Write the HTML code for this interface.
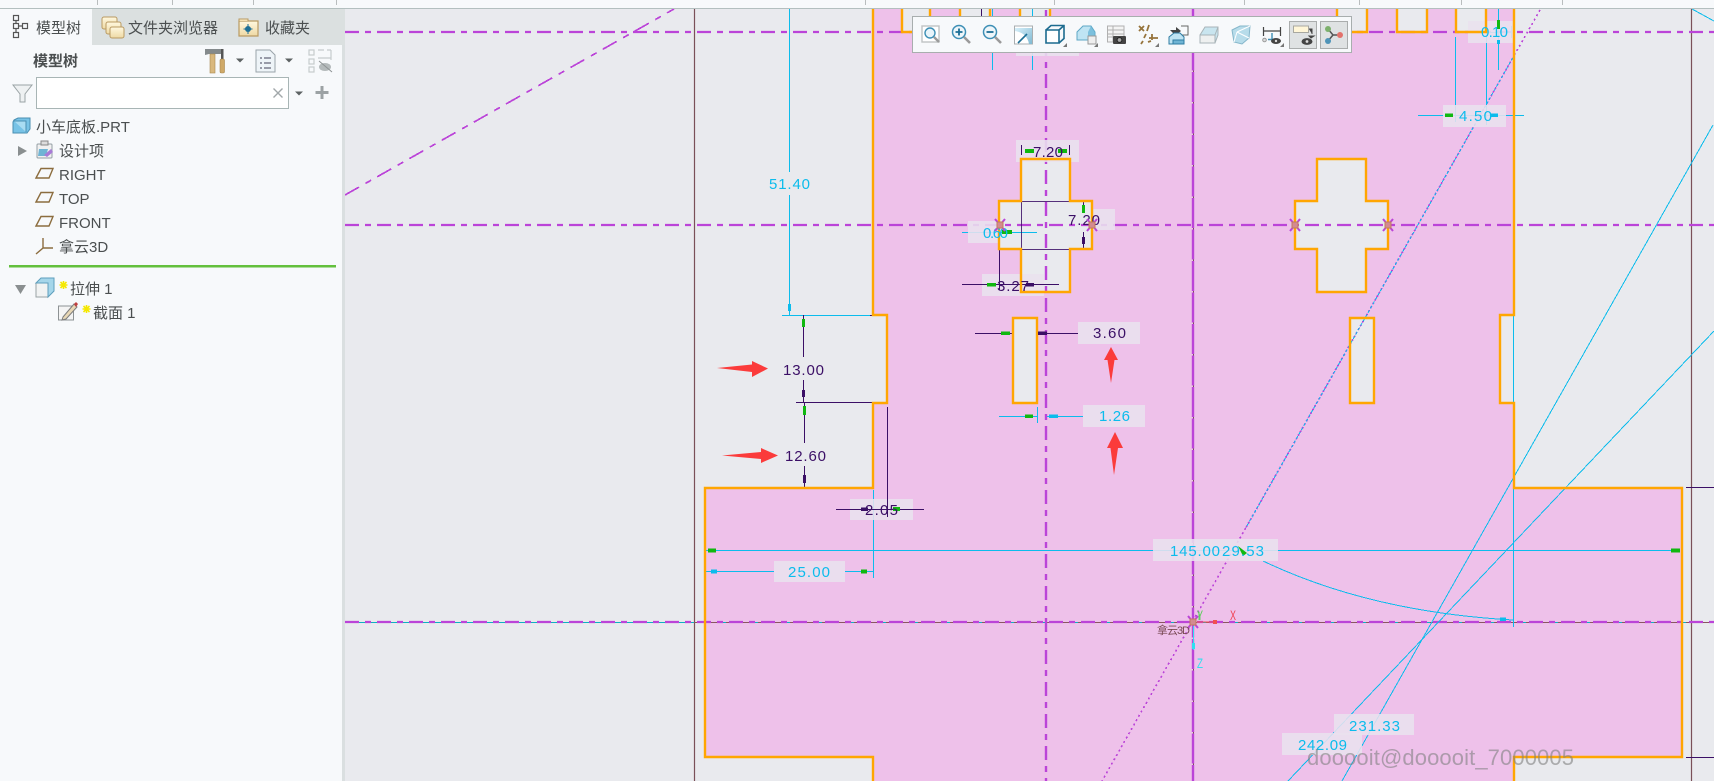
<!DOCTYPE html>
<html lang="zh"><head><meta charset="utf-8"><title>模型树</title>
<style>
html,body{margin:0;padding:0;background:#e9eaee;width:1714px;height:781px;overflow:hidden}
svg{display:block;position:absolute;left:0;top:0}
.d{font-family:"Liberation Sans",sans-serif;font-size:15px}
.c{fill:#0cbcec}.k{fill:#3b0f66}
.s{font-family:"Liberation Sans","Noto Sans CJK SC",sans-serif;font-size:15px;fill:#4b4f50}
.a{shape-rendering:crispEdges}
</style></head><body>
<svg width="1714" height="781" viewBox="0 0 1714 781" xmlns="http://www.w3.org/2000/svg">
<defs>
<g id="m"><path d="M-5-6L5 6M5-6L-5 6" stroke="#bb44d8" stroke-width="2" fill="none"/><rect x="-3" y="-3" width="6" height="6" fill="#d48a90" stroke="#c07a60"/></g>
<linearGradient id="bl" x1="0" y1="0" x2="1" y2="1"><stop offset="0" stop-color="#d8f0fa"/><stop offset="1" stop-color="#7fb9d2"/></linearGradient>
<linearGradient id="fo" x1="0" y1="0" x2="0" y2="1"><stop offset="0" stop-color="#fff8e0"/><stop offset="1" stop-color="#eed9a4"/></linearGradient>
</defs>
<rect width="1714" height="781" fill="#e9eaee"/>

<!-- pink body -->
<path fill="#eec1ea" d="M873 0V315H887V403H873V488H705V757H873V790H1514V757H1682V488H1514V403H1500V315H1514V0H1486V32H1456V0H1427V32H1397V0H1367V32H1337V0H1050V32H1020V0H990V32H960V0H930V32H902V0Z
M1021 159H1070V201H1092V249H1070V292H1021V249H999V201H1021Z M1317 159H1366V201H1388V249H1366V292H1317V249H1295V201H1317Z M1013 318H1037V403H1013Z M1350 318H1374V403H1350Z" fill-rule="evenodd"/>

<!-- reference lines -->
<g fill="none">
<path d="M694.5 9V781M1691.5 9V781" stroke="#7a5058" stroke-width="1.2"/>
<path d="M345 622.5H1714" stroke="#10b0c0"/>
<path d="M694 622.5H1714" stroke="#8a5560" stroke-dasharray="8 8"/>
<path d="M1193.5 9V781" stroke="#7a5058"/>
<g stroke="#bb44d8" stroke-width="2.2">
<path d="M345 32H1714M345 225H1714M345 622H1714" stroke-dasharray="14 6 6 6"/>
<path d="M1046 10V781" stroke-dasharray="14 6 6 6" stroke-width="2.4"/>
<path d="M1193 9V781" stroke-dasharray="30 1.5" stroke-width="2.4"/>
</g>
<path class="a" d="M345 195L674 9" stroke="#bb44d8" stroke-width="1.7" stroke-dasharray="16 7.5 6.5 7"/>
<g class="a" stroke="#bb44d8" stroke-width="1.6">
<path d="M1540 10L1512.7 58" stroke-dasharray="2 3"/>
<path d="M1512.7 58L1245.7 528" stroke-dasharray="2 2.2"/>
<path d="M1245.7 528L1102 781" stroke-dasharray="2 3"/>
</g>
<g class="a" stroke="#0cbcec">
<path d="M1713 125L1342 781"/>
<path d="M1714 331L1288 781"/>
<path d="M1692 9L1714 21"/>
<path d="M1512.7 58L1245.7 528" stroke-width="1" stroke-dasharray="3 2"/>
<path d="M1263 561Q1370 612 1513 620"/>
<path d="M789.5 9V172M789.5 195V315"/>
<path d="M782 315.5H870"/>
<path d="M1513.5 315V403M1513.5 488V627"/>
<path d="M873.5 490V578"/>
<path d="M706 550.5H1680"/>
<path d="M706 571.5H774M845 571.5H873"/>
<path d="M962 232.5H1037"/>
<path d="M999 416.5H1037M1047 416.5H1083M1037.5 407V423"/>
<path d="M992.5 9V16M1032.5 9V16M992.5 52V70M1032.5 52V70"/>
<path d="M1418 115.5H1524M1455.5 37V122M1486.5 32V125M1498.5 9V70M1483 32.5H1511M1511.5 26V38"/>
</g>
</g>

<!-- label boxes -->
<g fill="#e9e1ee" fill-opacity=".88">
<rect x="1016" y="140" width="63" height="22"/>
<rect x="1016" y="52" width="63" height="4"/>
<rect x="1092" y="209" width="23" height="21"/>
<rect x="968" y="221" width="31" height="22"/>
<rect x="982" y="274" width="62" height="22"/>
<rect x="1078" y="322" width="62" height="22"/>
<rect x="1083" y="405" width="62" height="22"/>
<rect x="850" y="499" width="63" height="21"/>
<rect x="774" y="561" width="71" height="21"/>
<rect x="1153" y="539" width="125" height="22"/>
<rect x="1334" y="714" width="80" height="21"/>
<rect x="1282" y="733" width="80" height="22"/>
<rect x="1443" y="105" width="63" height="22"/>
<rect x="1468" y="21" width="45" height="22"/>
</g>

<!-- dark dimension lines -->
<g fill="none" stroke="#3b0f66">
<path d="M981.5 9V16"/>
<path d="M803.5 315V357M803.5 380V402M796 402.5H873M804.5 403V443M804.5 466V487"/>
<path d="M887.5 407V517M836 509.5H924"/>
<path d="M1021.5 145V155M1069.5 145V155"/>
<path d="M1021 201.5H1070M1021 249.5H1070M1021.5 201V249" stroke-opacity=".85"/>
<path d="M1083.5 202V213M1083.5 232V248"/>
<path d="M999.5 249V290M962 284.5H1059"/>
<path d="M975 333.5H1013M1037 333.5H1078"/>
<path d="M1686 487.5H1714M1686 757.5H1714"/>
<path d="M870 315.5H873"/>
</g>

<!-- orange outline -->
<g fill="none" stroke="#ffa602" stroke-width="2.4" stroke-linejoin="miter">
<path d="M873 0V315H887V403H873V488H705V757H873V790M1514 790V757H1682V488H1514V403H1500V315H1514V0M1486 0V32H1456V0M1427 0V32H1397V0M1367 0V32H1337V0M1050 0V32H1020V0M990 0V32H960V0M930 0V32H902V0"/>
<path d="M1021 159H1070V201H1092V249H1070V292H1021V249H999V201H1021Z"/>
<path d="M1317 159H1366V201H1388V249H1366V292H1317V249H1295V201H1317Z"/>
<path d="M1013 318H1037V403H1013Z"/>
<path d="M1350 318H1374V403H1350Z"/>
</g>

<!-- arrow heads -->
<g fill="#10b810">
<rect x="708" y="548.5" width="8" height="4"/><rect x="1671" y="548.5" width="9" height="4"/>
<rect x="861" y="569.5" width="6" height="4"/>
<rect x="893" y="507" width="7" height="4"/>
<rect x="802" y="319" width="3" height="8"/><rect x="803" y="406" width="3" height="9"/>
<rect x="1025" y="149" width="9" height="4"/><rect x="1058" y="149" width="9" height="4"/>
<rect x="1082" y="205" width="3" height="8"/>
<rect x="1002" y="230" width="10" height="4"/>
<rect x="987" y="283" width="9" height="3.5"/>
<rect x="1001" y="331.5" width="9" height="3.5"/>
<rect x="1025" y="414.5" width="8" height="3.5"/>
<rect x="1445" y="113.5" width="8" height="3.5"/>
<rect x="1497" y="20" width="3" height="9"/>
<path d="M1238 546L1247 553L1243 556Z"/>
</g>
<g fill="#3b0f66">
<rect x="861" y="507.5" width="7" height="3.5"/>
<rect x="802" y="390" width="3" height="7"/><rect x="803" y="475" width="3" height="8"/>
<rect x="1082" y="237" width="3" height="7"/>
<rect x="1026" y="283" width="8" height="3.5"/>
<rect x="1038" y="331.5" width="9" height="3.5"/>
</g>
<g fill="#0cbcec">
<rect x="788" y="304" width="3" height="7"/>
<rect x="711" y="569.5" width="6" height="4"/>
<rect x="1049" y="414.5" width="9" height="3.5"/>
<rect x="1490" y="113.5" width="8" height="3.5"/>
<rect x="1497" y="40" width="3" height="4"/>
<rect x="1500" y="617.5" width="6" height="3.5"/>
</g>

<!-- dimension text -->
<text class="d c" x="769" y="189" textLength="41" lengthAdjust="spacing">51.40</text>
<text class="d k" x="783" y="375" textLength="41" lengthAdjust="spacing">13.00</text>
<text class="d k" x="785" y="461" textLength="41" lengthAdjust="spacing">12.60</text>
<text class="d k" x="1033" y="157" textLength="30" lengthAdjust="spacing">7.20</text>
<text class="d k" x="1068" y="225" textLength="32" lengthAdjust="spacing">7.20</text>
<text class="d c" x="983" y="238" textLength="25" lengthAdjust="spacing">0.60</text>
<text class="d k" x="997" y="291" textLength="32" lengthAdjust="spacing">3.27</text>
<text class="d k" x="1093" y="338" textLength="33" lengthAdjust="spacing">3.60</text>
<text class="d c" x="1099" y="421" textLength="31" lengthAdjust="spacing">1.26</text>
<text class="d k" x="865" y="515" textLength="33" lengthAdjust="spacing">2.05</text>
<text class="d c" x="788" y="577" textLength="42" lengthAdjust="spacing">25.00</text>
<text class="d c" x="1170" y="556" textLength="50" lengthAdjust="spacing">145.00</text>
<text class="d c" x="1222" y="556" textLength="42" lengthAdjust="spacing">29.53</text>
<text class="d c" x="1349" y="731" textLength="51" lengthAdjust="spacing">231.33</text>
<text class="d c" x="1298" y="750" textLength="49" lengthAdjust="spacing">242.09</text>
<text class="d c" x="1459" y="121" textLength="33" lengthAdjust="spacing">4.50</text>
<text class="d c" x="1481" y="37" textLength="27" lengthAdjust="spacing">0.10</text>

<!-- datum markers -->
<use href="#m" x="1000" y="225"/><use href="#m" x="1092" y="225"/><use href="#m" x="1295" y="225"/><use href="#m" x="1388" y="225"/>
<use href="#m" x="1193" y="622"/>

<!-- csys -->
<path d="M1197 622H1216" stroke="#f05050" fill="none"/><rect x="1213" y="620" width="4" height="4" fill="#f05050"/>
<path d="M1193.5 626V650" stroke="#30e0f0" fill="none"/><rect x="1192" y="643" width="3" height="6" fill="#30e0f0"/>
<path d="M1199 612V620" stroke="#60d060"/>
<text x="1197" y="620" font-family="Liberation Sans,sans-serif" font-size="14" fill="#50d050" textLength="6" lengthAdjust="spacingAndGlyphs">Y</text>
<text x="1230" y="620" font-family="Liberation Sans,sans-serif" font-size="14" fill="#f04050" textLength="6" lengthAdjust="spacingAndGlyphs">X</text>
<text x="1197" y="668" font-family="Liberation Sans,sans-serif" font-size="14" fill="#30e0f0" textLength="6" lengthAdjust="spacingAndGlyphs">Z</text>
<text x="1157" y="634" font-family="&quot;Liberation Sans&quot;,&quot;Noto Sans CJK SC&quot;,sans-serif" font-size="11" fill="#7a4a55" textLength="33" lengthAdjust="spacing">拿云3D</text>

<!-- red arrows -->
<g fill="#fb3b3b">
<path d="M717 368L752 364.5V361L768 368.5L752 377V372Z"/>
<path d="M722 455.5L761 452V448L778 455.5L761 463V459Z"/>
<path d="M1111 347L1118 360H1114.5L1111 383L1107.5 360H1104Z"/>
<path d="M1115 432L1123 448H1118L1114 475L1110.5 448H1107Z"/>
</g>

<!-- watermark -->
<text x="1307" y="765" font-family="Liberation Sans,sans-serif" font-size="22" fill="#808080" fill-opacity=".6" textLength="267" lengthAdjust="spacing">dooooit@dooooit_7000005</text>

<!-- floating toolbar -->
<rect x="912.5" y="16.5" width="439" height="36" fill="#f7f9fb" stroke="#a8aeae"/>
<rect x="1289.5" y="21.5" width="27" height="27" fill="#dfe2e3" stroke="#aaadad"/>
<rect x="1320.5" y="21.5" width="27" height="27" fill="#dfe2e3" stroke="#aaadad"/>
<!-- 1 zoom fit -->
<rect x="922" y="26" width="17" height="16" fill="#fff" stroke="#bfc3c4" stroke-width="1.4"/>
<circle cx="930" cy="33" r="5" fill="#e8f4fa" stroke="#3d8fb5" stroke-width="1.4"/>
<path d="M934 37L939 42" stroke="#9a9a9a" stroke-width="2.4"/>
<!-- 2 zoom in -->
<circle cx="959" cy="32" r="6.5" fill="#eef6fa" stroke="#3d8fb5" stroke-width="1.5"/>
<path d="M955.5 32H962.5M959 28.5V35.5" stroke="#1c6f96" stroke-width="1.8"/>
<path d="M964 37L970 43" stroke="#9a9a9a" stroke-width="2.6"/>
<!-- 3 zoom out -->
<circle cx="990" cy="32" r="6.5" fill="#eef6fa" stroke="#3d8fb5" stroke-width="1.5"/>
<path d="M986.5 32H993.5" stroke="#1c6f96" stroke-width="1.8"/>
<path d="M995 37L1001 43" stroke="#9a9a9a" stroke-width="2.6"/>
<!-- 4 refit -->
<rect x="1014.5" y="26" width="18" height="18" fill="#fff" stroke="#a9aeb0"/>
<path d="M1015 28H1032V44H1029Q1027 33 1015 31Z" fill="url(#bl)"/>
<path d="M1018 43L1027 34" stroke="#1c6f96" stroke-width="1.6"/>
<!-- 5 cube -->
<path d="M1046 30H1059V43H1046Z" fill="#fff" stroke="#1c6b8f" stroke-width="1.6"/>
<path d="M1046 30L1051 25.5H1064V38.5L1059 43M1059 30L1064 25.5" fill="none" stroke="#1c6b8f" stroke-width="1.6"/>
<path d="M1067 43V47H1063Z" fill="#777"/>
<!-- 6 display style -->
<path d="M1077 32L1083 26H1091L1095 32V40H1077Z" fill="#bfe4f3" stroke="#5fa8c6"/>
<path d="M1077 32H1088L1091 26L1095 32V40H1088V32" fill="#5fb1d3" fill-opacity=".7"/>
<rect x="1088" y="36" width="8" height="8" fill="#eee" stroke="#999"/>
<path d="M1098 43V47H1094Z" fill="#777"/>
<!-- 7 table camera -->
<path d="M1107.5 26H1124V37H1107.5ZM1107.5 30H1124M1107.5 34H1124M1107.5 37V42H1114M1113 26V42" fill="#f4f4f4" stroke="#b0b0b0"/>
<rect x="1113" y="36" width="13" height="8" rx="1" fill="#444"/><circle cx="1119.5" cy="40" r="2.4" fill="#aaa" stroke="#222"/>
<!-- 8 datum -->
<g stroke="#96743c" stroke-width="1.8" fill="none"><path d="M1139 26L1144 31M1144 26L1139 31M1149 25L1147 31M1146 34L1144 38M1143 41L1141 44M1148 42L1151 41M1152 34V40M1149 38H1158"/></g>
<path d="M1159 43V47H1155Z" fill="#777"/>
<!-- 9 boxes -->
<path d="M1181 26H1188V35H1181" fill="none" stroke="#666"/>
<path d="M1170 30H1176V27L1181 31L1176 35V33H1173" fill="#444"/>
<path d="M1169 37L1174 33H1180L1184 37V44H1169Z" fill="#bfe4f3" stroke="#2f7da3"/>
<path d="M1173 40H1184V44H1173Z" fill="#6fb4d4" stroke="#2f7da3"/>
<!-- 10 light cube -->
<path d="M1200 35L1205 27H1218L1218 35L1215 43H1200Z" fill="#c9e5ef" stroke="#a8b4b8"/>
<path d="M1200 35H1215V43H1200Z" fill="#eef0f0" stroke="#a8b4b8"/><path d="M1215 35L1218 27" stroke="#a8b4b8"/>
<!-- 11 translucent -->
<path d="M1232 30L1240 26H1250L1249 38L1242 44L1234 42Z" fill="#b7dcea" stroke="#85b6ca"/>
<path d="M1237 32L1250 26M1237 32L1234 42M1237 32L1249 38" stroke="#fff" fill="none"/>
<!-- 12 dims -->
<path d="M1263.5 27V36M1280.5 27V36M1264 31H1280" stroke="#444" stroke-width="1.2" fill="none"/>
<path d="M1272 33V39M1268 39.5H1276" stroke="#3d8fb5" stroke-width="1.4"/>
<circle cx="1264.5" cy="40" r="1.8" fill="#ddd" stroke="#999"/>
<ellipse cx="1276" cy="41" rx="5" ry="3" fill="#444"/><circle cx="1276" cy="41" r="1.2" fill="#ddd"/>
<path d="M1284 43V47H1280Z" fill="#777"/>
<!-- 13 -->
<rect x="1293.5" y="26" width="15" height="6.5" fill="#fff6d8" stroke="#a8a8a0"/>
<path d="M1309 29H1312V34M1309 36L1314 36L1311 38Z" stroke="#444" fill="#444"/>
<ellipse cx="1307" cy="41.5" rx="5.5" ry="3.4" fill="#444"/><circle cx="1307" cy="41.5" r="1.4" fill="#ddd"/>
<!-- 14 nodes -->
<path d="M1328 29L1333 35L1340 35M1333 35L1328 41" stroke="#555" stroke-width="1.5" fill="none"/>
<circle cx="1328" cy="29" r="3" fill="#7cb06c"/><circle cx="1340" cy="35" r="3" fill="#e3726c"/><circle cx="1328" cy="41" r="3" fill="#4f94b8"/>

<!-- top strip -->
<rect x="0" y="0" width="1714" height="8" fill="#f7f9fb"/>
<rect x="0" y="8" width="1714" height="1" fill="#b3bfbf"/>
<path d="M97.5 0V5M172.5 0V5M253.5 0V5M336.5 0V5M865.5 0V5M1054.5 0V5M1244.5 0V5M1359.5 0V5M1461.5 0V5M1562.5 0V5" stroke="#b9bdbe"/>

<!-- sidebar -->
<rect x="0" y="9" width="342" height="772" fill="#f7f9fb"/>
<rect x="342" y="9" width="3" height="772" fill="#dadfe0"/>
<rect x="92" y="9" width="253" height="36" fill="#dbe0e0"/>
<rect x="0" y="9" width="92" height="36" fill="#f7f9fb"/>

<!-- tab icons -->
<g fill="none" stroke="#555" stroke-width="1.2">
<rect x="13.5" y="15.5" width="5" height="5"/><rect x="13.5" y="23.5" width="5" height="5"/><rect x="13.5" y="32.5" width="5" height="5"/><rect x="22.5" y="23.5" width="5" height="5"/>
<path d="M16 20.5V23.5M16 28.5V32.5M18.5 26H22.5"/>
</g>
<g stroke="#b99a62" fill="url(#fo)">
<rect x="102" y="17" width="15" height="12" rx="2"/><rect x="106" y="22" width="15" height="12" rx="2"/><rect x="110" y="27" width="14" height="11" rx="2"/>
<path d="M239 21H258V36H239Z" stroke-width="1.2"/><path d="M239 21V19H248V21"/>
</g>
<circle cx="248" cy="29" r="3" fill="#1c6f96"/><path d="M248 24V34M243.5 29H252.5" stroke="#1c6f96"/>
<text class="s" x="36" y="33">模型树</text>
<text class="s" x="128" y="33">文件夹浏览器</text>
<text class="s" x="265" y="33">收藏夹</text>
<text class="s" x="33" y="66" font-weight="700">模型树</text>

<!-- tools -->
<path d="M205 49H221L222 54H209L205 55Z" fill="#848a8c"/>
<rect x="210" y="54" width="5" height="19" fill="#d9b87e" stroke="#a88850" stroke-width=".6"/>
<rect x="221" y="49" width="2.5" height="11" fill="#555"/><rect x="220" y="59" width="4.5" height="14" rx="1.5" fill="#cfa968" stroke="#a88850" stroke-width=".6"/>
<path d="M236 58.5H244L240 62.5Z" fill="#5d6263"/>
<path d="M256 50H270L275 55V72H256Z" fill="#eef4f8" stroke="#9aa4aa"/>
<path d="M260 58H262M264 58H271M260 63H262M264 63H271M260 68H262M264 68H271" stroke="#667" stroke-width="1.2"/>
<path d="M285 58.5H293L289 62.5Z" fill="#5d6263"/>
<g fill="none" stroke="#c6cccd" stroke-width="1.2"><rect x="309" y="50" width="5" height="5"/><rect x="309" y="59" width="5" height="5"/><rect x="309" y="67" width="5" height="5"/><path d="M318 50H324M327 50H331M318 58H331M331 50V60"/></g>
<ellipse cx="325" cy="67" rx="6" ry="4" fill="#b4babb"/><path d="M319 61L332 72" stroke="#8e9394"/>

<!-- filter row -->
<path d="M13 85H32L25 94V102H20V94Z" fill="#eef1f2" stroke="#9aa3a5"/>
<rect x="36.5" y="77.5" width="252" height="31" fill="#fff" stroke="#a8b5b5"/>
<path d="M273.5 88.5L282.5 97.5M282.5 88.5L273.5 97.5" stroke="#a2a8aa" stroke-width="1.4"/>
<path d="M295 91.5H303L299 95.5Z" fill="#5d6263"/>
<path d="M322 86V99M315.5 92.5H328.5" stroke="#9ca2a4" stroke-width="3"/>

<!-- tree -->
<path d="M14 120L18 118H30V129L27 133H13V122Z" fill="#78c3e6" stroke="#4a8fb2"/><path d="M14 121H26V132" fill="#a9dcf2" stroke="#4a8fb2"/>
<text class="s" x="36" y="132">小车底板.PRT</text>
<path d="M18 146L27 151L18 156Z" fill="#8a8f90"/>
<rect x="37" y="144" width="15" height="14" rx="1" fill="#f1f1f1" stroke="#95a0a5"/><rect x="41" y="141" width="7" height="4" fill="#ddd" stroke="#888"/>
<path d="M39 149H48L46 156H38Z" fill="#6fb4d4"/><path d="M44 155L51 149L53 152L47 157Z" fill="#a87bd6"/>
<text class="s" x="59" y="156">设计项</text>
<g fill="none" stroke="#8c6d3f" stroke-width="1.4">
<path d="M36 178L41 168.5H53L49 178Z"/><path d="M36 202L41 192.5H53L49 202Z"/><path d="M36 226L41 216.5H53L49 226Z"/>
<path d="M43 238V248L36 254M43 248H53"/>
</g>
<text class="s" x="59" y="180">RIGHT</text>
<text class="s" x="59" y="204">TOP</text>
<text class="s" x="59" y="228">FRONT</text>
<text class="s" x="59" y="252">拿云3D</text>
<rect x="9" y="265" width="327" height="2.5" fill="#63c03d"/>
<path d="M15 285H26L20.5 294Z" fill="#8a8f90"/>
<path d="M36 283H48V297H36Z" fill="#f1f3f3" stroke="#9aa3a5"/><path d="M36 283L41 278H54V291L48 297V283Z" fill="#a5d6ea" stroke="#5e9fbd"/>
<path d="M59.5 285H67.5M63.5 281V289M60.5 282L66.5 288M66.5 282L60.5 288" stroke="#f5e800" stroke-width="1.6"/>
<text class="s" x="70" y="294">拉伸 1</text>
<rect x="58.5" y="306" width="15" height="14" fill="#f4f4f4" stroke="#8d9294"/>
<path d="M63 317L74 304L77 307L66 319L62 320Z" fill="#e8d7b5" stroke="#7d7d7d"/><path d="M74 304L76 302L78 304L76 307Z" fill="#c04040"/>
<path d="M82.5 309H90.5M86.5 305V313M83.5 306L89.5 312M89.5 306L83.5 312" stroke="#f5e800" stroke-width="1.6"/>
<text class="s" x="93" y="318">截面 1</text>
</svg>
</body></html>
